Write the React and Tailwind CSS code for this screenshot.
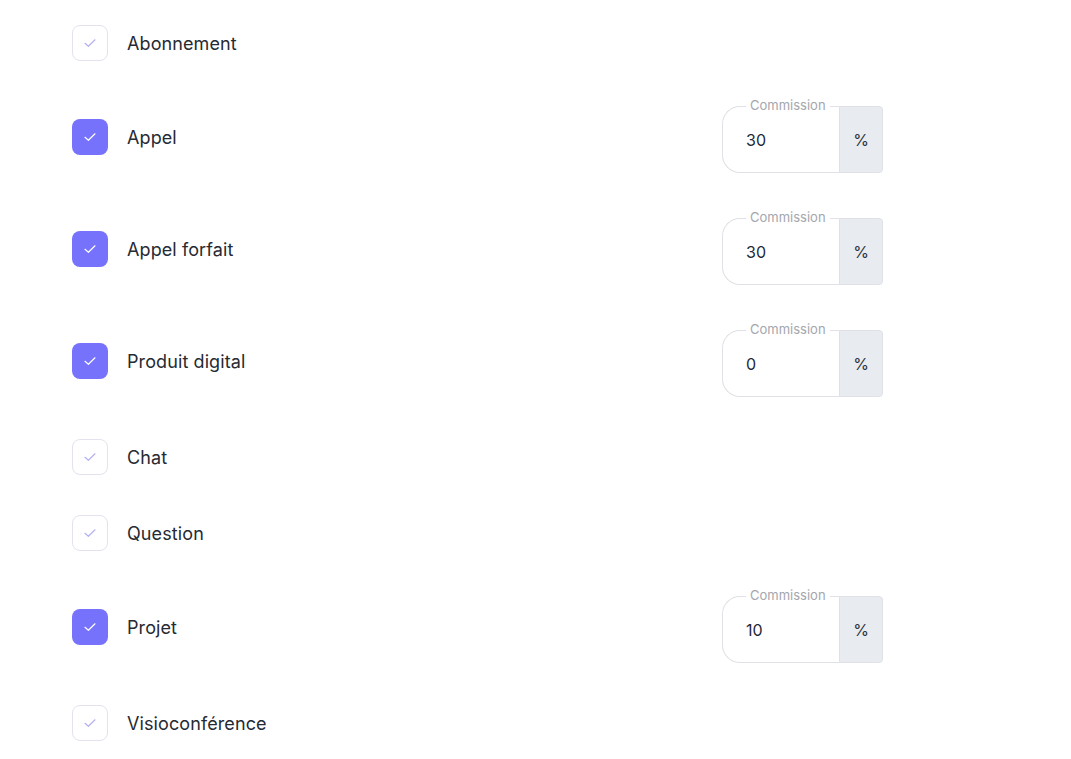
import React from 'react';

const items = [
    { label: 'Abonnement', checked: false },
    { label: 'Appel', checked: true, commission: '30' },
    { label: 'Appel forfait', checked: true, commission: '30' },
    { label: 'Produit digital', checked: true, commission: '0' },
    { label: 'Chat', checked: false },
    { label: 'Question', checked: false },
    { label: 'Projet', checked: true, commission: '10' },
    { label: 'Visioconférence', checked: false },
];

const Check = ({ checked }) => (
    <div
        className={
            checked
                ? 'w-9 h-9 rounded-[8px] bg-[#7672fb] flex items-center justify-center shrink-0'
                : 'w-9 h-9 rounded-[8px] border border-[#e3e2ee] bg-white flex items-center justify-center shrink-0'
        }
    >
        <svg width="16" height="16" viewBox="0 0 16 16" fill="none">
            <path
                d="M3 8.3 L6.4 11.3 L13 4.8"
                stroke={checked ? '#ffffff' : '#b4b0f4'}
                strokeWidth="1.2"
                strokeLinecap="round"
                strokeLinejoin="round"
            />
        </svg>
    </div>
);

const Commission = ({ value }) => (
    <div className="relative flex mt-[5px] h-[67px] w-[161px]">
        <span className="absolute left-[24px] -top-[9px] px-[4px] bg-white text-[13px] leading-[17px] text-[#a3a6ad]">
            Commission
        </span>
        <div className="flex-1 flex items-center pl-[23px] pt-[1px] border border-[#dfe1e6] border-r-0 rounded-l-[18px] text-[16px] text-[#1f2937]">
            {value}
        </div>
        <div className="w-[44px] flex items-center justify-center pt-[1px] bg-[#e8ebef] border border-[#dfe1e6] rounded-r-[4px] text-[16px] text-[#2d3340]">
            %
        </div>
    </div>
);

export default function App() {
    return (
        <div
            className="min-h-screen bg-white pt-[25px] pl-[72px]"
            style={{ fontFamily: 'Inter, "Noto Sans", sans-serif' }}
        >
            <div className="flex flex-col gap-10 w-[811px]">
                {items.map((item, i) => {
                    const afterInput = i > 0 && items[i - 1].commission !== undefined && item.commission === undefined;
                    return (
                        <div
                            key={item.label}
                            className={afterInput ? 'flex items-center justify-between mt-[2px]' : 'flex items-center justify-between'}
                        >
                            <div className="flex items-center gap-[19px]">
                                <Check checked={item.checked} />
                                <span className="text-[18px] tracking-[0.1px] text-[#262a33]">{item.label}</span>
                            </div>
                            {item.commission !== undefined && <Commission value={item.commission} />}
                        </div>
                    );
                })}
            </div>
        </div>
    );
}
